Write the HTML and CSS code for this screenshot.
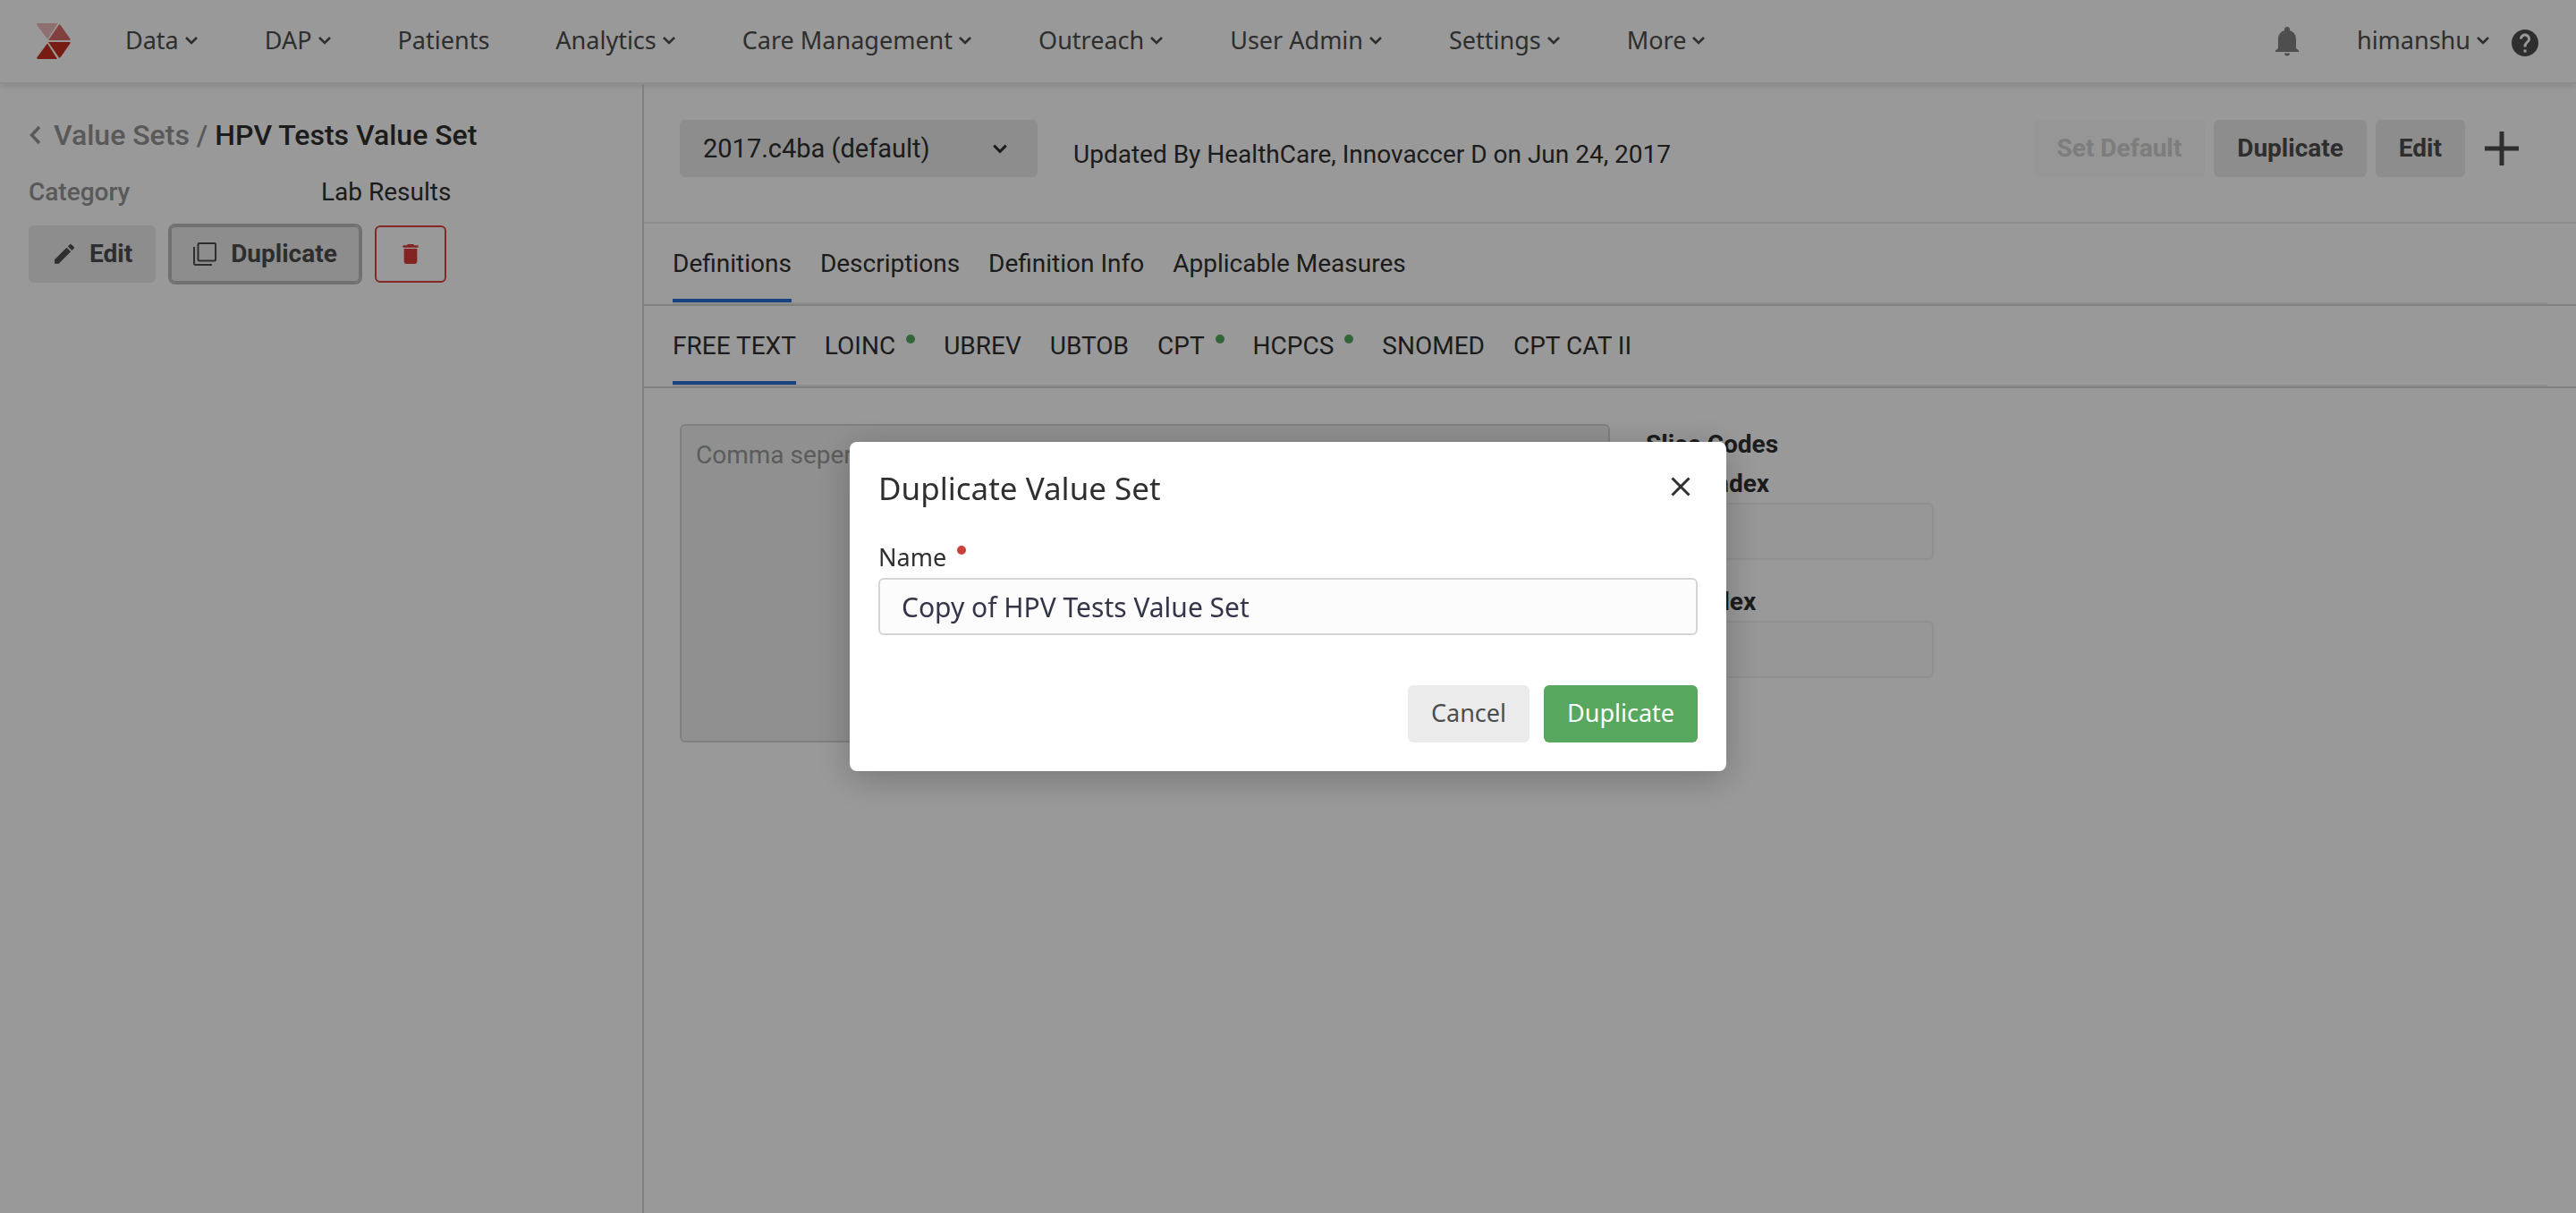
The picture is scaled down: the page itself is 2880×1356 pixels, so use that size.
FILE: index.html
```html
<!DOCTYPE html>
<html lang="en">
<head>
<meta charset="utf-8">
<title>HPV Tests Value Set</title>
<link rel="stylesheet" href="styles.css">
</head>
<body>
<svg class="sprite" aria-hidden="true">
  <symbol id="chevron" viewBox="0 0 16 16"><path d="M2 5l6 6 6-6" fill="none" stroke="currentColor" stroke-width="2.6"/></symbol>
</svg>

<div class="app">
  <header class="topbar">
    <a class="logo" href="#" aria-label="Home">
      <svg viewBox="0 0 38 40">
        <path d="M1 0h22.500L12.500 17.500Q11.500 17.500 0 1.500 0 0 1 0z" fill="#eebbbb"/>
        <path d="M25 1.500Q26 1 27 2.500L37.500 17.500V19H13z" fill="#d86a68"/>
        <path d="M13 21h24.500v1.500L27 37.500Q26 39 25 38.500z" fill="#c92d20"/>
        <path d="M12 22.500L23 40H1.500Q-.5 39.500 .5 38z" fill="#c92d20"/>
      </svg>
    </a>
    <nav class="menu">
      <a class="menu-item" href="#">Data <svg class="chev"><use href="#chevron"/></svg></a>
      <a class="menu-item" href="#">DAP <svg class="chev"><use href="#chevron"/></svg></a>
      <a class="menu-item" href="#">Patients</a>
      <a class="menu-item" href="#">Analytics <svg class="chev"><use href="#chevron"/></svg></a>
      <a class="menu-item" href="#">Care Management <svg class="chev"><use href="#chevron"/></svg></a>
      <a class="menu-item" href="#">Outreach <svg class="chev"><use href="#chevron"/></svg></a>
      <a class="menu-item" href="#">User Admin <svg class="chev"><use href="#chevron"/></svg></a>
      <a class="menu-item" href="#">Settings <svg class="chev"><use href="#chevron"/></svg></a>
      <a class="menu-item" href="#">More <svg class="chev"><use href="#chevron"/></svg></a>
    </nav>
    <div class="account">
      <button class="icon-button bell" type="button" aria-label="Notifications">
        <svg viewBox="0 0 28 34"><path d="M14 1a3 3 0 0 1 3 3v1c4.500 1.500 7 5 7 10v10l3 2.500V29H1v-1.500L4 25V15c0-5 2.500-8.500 7-10V4a3 3 0 0 1 3-3zM11 30.500h6a3 3 0 0 1-6 0z" fill="currentColor"/></svg>
      </button>
      <a class="menu-item" href="#">himanshu <svg class="chev"><use href="#chevron"/></svg></a>
      <button class="icon-button help" type="button" aria-label="Help">
        <svg viewBox="2 2 20 20"><path d="M12 2C6.480 2 2 6.480 2 12s4.480 10 10 10 10-4.480 10-10S17.520 2 12 2zm1 17h-2v-2h2v2zm2.070-7.750l-.9.920C13.450 12.900 13 13.500 13 15h-2v-.5c0-1.100.45-2.100 1.170-2.830l1.240-1.260c.37-.36.59-.86.59-1.410 0-1.100-.9-2-2-2s-2 .9-2 2H8c0-2.210 1.790-4 4-4s4 1.790 4 4c0 .88-.36 1.680-.93 2.250z" fill="currentColor"/></svg>
      </button>
    </div>
  </header>

  <div class="workspace">
    <aside class="sidebar">
      <h1 class="crumbs">
        <a class="back" href="#"><svg class="back-icon" viewBox="0 0 14 22"><path d="M12 2L3.500 11l8.500 9" fill="none" stroke="currentColor" stroke-width="3.400"/></svg>Value Sets /</a>
        <span>HPV Tests Value Set</span>
      </h1>
      <dl class="facts"><dt>Category</dt><dd>Lab Results</dd></dl>
      <div class="side-actions">
        <button class="button with-icon" type="button"><svg class="icon" viewBox="0.500 1.500 21.300 21.300"><path d="M3 17.250V21h3.750L17.810 9.940l-3.750-3.750L3 17.250zM20.710 7.040a1 1 0 0 0 0-1.410l-2.340-2.340a1 1 0 0 0-1.410 0l-1.830 1.830 3.750 3.750 1.830-1.830z" fill="currentColor"/></svg>Edit</button>
        <button class="button with-icon focused" type="button"><svg class="icon" viewBox="0 0 26 26"><path d="M6.500 1H24a1 1 0 0 1 1 1v17.500a1 1 0 0 1-1 1H6.500a1 1 0 0 1-1-1V2a1 1 0 0 1 1-1zM1 5v18.500A1.500 1.500 0 0 0 2.500 25H21" fill="none" stroke="currentColor" stroke-width="2"/></svg>Duplicate</button>
        <button class="button danger" type="button" aria-label="Delete"><svg class="icon-trash" viewBox="5 3 14 18"><path d="M6 19a2 2 0 0 0 2 2h8a2 2 0 0 0 2-2V7H6v12zM19 4h-3.500l-1-1h-5l-1 1H5v2h14V4z" fill="currentColor"/></svg></button>
      </div>
    </aside>

    <main class="main">
      <div class="toolbar">
        <div class="select-wrap">
          <select class="version" aria-label="Version"><option>2017.c4ba (default)</option></select>
          <svg class="select-chev"><use href="#chevron"/></svg>
        </div>
        <p class="updated">Updated By HealthCare, Innovaccer D on Jun 24, 2017</p>
        <div class="actions">
          <button class="button" type="button" disabled>Set Default</button>
          <button class="button" type="button">Duplicate</button>
          <button class="button" type="button">Edit</button>
          <button class="icon-button plus" type="button" aria-label="Add"><svg viewBox="0 0 38 38"><path d="M19 0v38M0 19h38" stroke="currentColor" stroke-width="5"/></svg></button>
        </div>
      </div>

      <div class="tab-band"><nav class="tabs">
        <a class="tab current" href="#">Definitions</a>
        <a class="tab" href="#">Descriptions</a>
        <a class="tab" href="#">Definition Info</a>
        <a class="tab" href="#">Applicable Measures</a>
      </nav></div>
      <div class="tab-band"><nav class="tabs">
        <a class="tab current" href="#">FREE TEXT</a>
        <a class="tab filled" href="#">LOINC</a>
        <a class="tab" href="#">UBREV</a>
        <a class="tab" href="#">UBTOB</a>
        <a class="tab filled" href="#">CPT</a>
        <a class="tab filled" href="#">HCPCS</a>
        <a class="tab" href="#">SNOMED</a>
        <a class="tab" href="#">CPT CAT II</a>
      </nav></div>

      <div class="editor">
        <textarea class="codes" aria-label="Codes" placeholder="Comma seperated codes"></textarea>
        <fieldset class="slice">
          <legend>Slice Codes</legend>
          <label for="start">Start Index</label>
          <input id="start" type="text">
          <label for="end">End Index</label>
          <input id="end" type="text">
        </fieldset>
      </div>
    </main>
  </div>
</div>

<div class="backdrop">
  <form class="dialog" role="dialog" aria-labelledby="dialog-title">
    <div class="dialog-head">
      <h2 id="dialog-title">Duplicate Value Set</h2>
      <button class="icon-button close" type="button" aria-label="Close"><svg viewBox="0 0 22 22"><path d="M1.500 1.500l19 19M20.500 1.500l-19 19" stroke="currentColor" stroke-width="3"/></svg></button>
    </div>
    <label class="name-label" for="name">Name</label>
    <input class="name-input" id="name" type="text" value="Copy of HPV Tests Value Set">
    <div class="dialog-actions">
      <button class="dialog-button" type="button">Cancel</button>
      <button class="dialog-button primary" type="button">Duplicate</button>
    </div>
  </form>
</div>
</body>
</html>
```
FILE: styles.css
```css
* { box-sizing: border-box; }

body {
  margin: 0;
  background: #fff;
  color: #2f2f2f;
  font: 28px/36px Roboto, "Liberation Sans", sans-serif;
}

a { color: inherit; text-decoration: none; }
button, input, select, textarea { font: inherit; color: inherit; margin: 0; }
svg { display: block; flex: none; }
h1, h2, p, dl, dd { margin: 0; }

.sprite { position: absolute; width: 0; height: 0; }

.app { display: flex; flex-direction: column; min-height: 100vh; }

/* Top bar */
.topbar {
  display: flex;
  align-items: center;
  height: 94px;
  padding: 0 42px 0 41px;
  border-bottom: 2px solid #ebebeb;
  box-shadow: 0 2px 8px rgba(0, 0, 0, .12);
  color: #4d4d4d;
  font-family: "Noto Sans", sans-serif;
  font-size: 27px;
}
.logo svg { width: 38px; height: 40px; }
.menu { display: flex; gap: 74px; margin-left: 61px; padding-bottom: 3px; }
.menu-item { display: flex; align-items: center; gap: 6px; white-space: nowrap; }
.chev { width: 16px; height: 16px; }
.account { display: flex; align-items: center; margin-left: auto; }
.account .menu-item { padding-bottom: 3px; }
.icon-button { padding: 0; border: 0; background: none; }
.bell { margin-right: 64px; color: #828282; }
.bell svg { width: 28px; height: 34px; }
.help { margin: 4px 0 0 24px; }
.help svg { width: 30px; height: 30px; }

/* Two-column body */
.workspace { flex: 1; display: flex; }
.sidebar {
  width: 25%;
  padding: 37px 32px;
  border-right: 2px solid #d5d5d5;
}
.crumbs { display: flex; align-items: center; gap: 8px; font-size: 32px; line-height: 40px; font-weight: 500; }
.back { display: flex; align-items: center; gap: 14px; color: #949494; }
.back-icon { width: 14px; height: 22px; }
.facts { display: flex; margin-top: 26px; }
.facts dt { width: 327px; color: #949494; font-weight: 500; }
.side-actions { display: flex; gap: 16px; margin-top: 19px; }

.button {
  height: 64px;
  padding: 0 26px;
  border: 0;
  border-radius: 6px;
  background: #ebebeb;
  color: #4d4d4d;
  font-weight: 700;
}
.button:disabled { background: #fafafa; color: #d0d0d0; }
.with-icon { display: flex; align-items: center; gap: 16px; }
.icon { width: 26px; height: 26px; }
.focused { padding: 0 24px; border: 2px solid #bdbdbd; outline: 2px solid #bdbdbd; }
.danger { display: grid; place-items: center; width: 80px; padding: 0; border: 2px solid #da4440; background: none; color: #da3d39; }
.icon-trash { width: 18px; height: 22px; }

.main { flex: 1; min-width: 0; }
.toolbar {
  display: flex;
  align-items: center;
  height: 156px;
  padding: 0 64px 10px 40px;
  border-bottom: 2px solid #ebebeb;
}
.select-wrap { display: grid; width: 400px; align-items: center; }
.version, .select-chev { grid-area: 1 / 1; }
.version {
  width: 100%;
  height: 64px;
  padding: 0 26px;
  border: 0;
  border-radius: 6px;
  background: #ebebeb;
  font-size: 29px;
  appearance: none;
}
.select-chev { justify-self: end; width: 18px; height: 18px; margin-right: 33px; }
.updated { margin: 14px 0 0 40px; }
.actions { display: flex; align-items: center; gap: 10px; margin-left: auto; }
.plus { margin-left: 12px; color: #4d4d4d; }
.plus svg { width: 38px; height: 38px; }

/* Tab rows */
.tab-band { border-bottom: 2px solid #d5d5d5; padding: 0 32px; }
.tabs { display: flex; gap: 32px; height: 90px; border-bottom: 2px solid #ebebeb; }
.tab { padding-top: 27px; border-bottom: 4px solid transparent; }
.current { border-color: #2a70d3; }
.filled { display: flex; gap: 12px; }
.filled::after { content: ""; width: 10px; height: 10px; margin-top: 5px; border-radius: 50%; background: #58a75f; }

.editor { display: flex; gap: 40px; padding: 40px; }
.codes {
  width: 1040px;
  height: 356px;
  padding: 15px 16px;
  border: 2px solid #d5d5d5;
  border-radius: 6px;
  background: #f0f0f0;
  resize: none;
}
.codes::placeholder { color: #9a9a9a; }
.slice { display: flex; flex-direction: column; width: 322px; min-width: 0; margin: 0; padding: 0; border: 0; font-weight: 700; }
.slice legend { padding: 5px 0 3px; }
.slice label { padding-top: 2px; line-height: 42px; }
.slice input { height: 64px; margin-bottom: 24px; border: 2px solid #f0f0f0; border-radius: 6px; background: #fcfcfc; }

/* Dialog */
.backdrop {
  position: fixed;
  inset: 0;
  display: grid;
  place-items: center;
  background: rgba(0, 0, 0, .4);
}
.dialog {
  width: 980px;
  padding: 32px;
  border-radius: 8px;
  background: #fff;
  box-shadow: 0 8px 40px rgba(0, 0, 0, .24);
  font-family: "Noto Sans", sans-serif;
  font-size: 27px;
}
.dialog-head { display: flex; align-items: center; justify-content: space-between; }
.dialog-head h2 { font-size: 35px; line-height: 40px; font-weight: 400; }
.close { margin: 0 8px 4px 0; }
.close svg { width: 22px; height: 22px; }
.name-label { display: flex; gap: 12px; margin-top: 37px; line-height: 40px; }
.name-label::after { content: ""; width: 10px; height: 10px; margin-top: 7px; border-radius: 50%; background: #cb413c; }
.name-input {
  display: block;
  width: 100%;
  height: 64px;
  margin-top: 3px;
  padding: 0 24px;
  border: 2px solid #d5d5d5;
  border-radius: 6px;
  background: #fcfcfc;
  color: #333548;
  font-size: 30px;
}
.dialog-actions { display: flex; justify-content: flex-end; gap: 16px; margin-top: 56px; }
.dialog-button { height: 64px; padding: 0 26px 2px; border: 0; border-radius: 6px; background: #ebebeb; color: #4d4d4d; }
.primary { background: #58a75f; color: #fff; }
```
